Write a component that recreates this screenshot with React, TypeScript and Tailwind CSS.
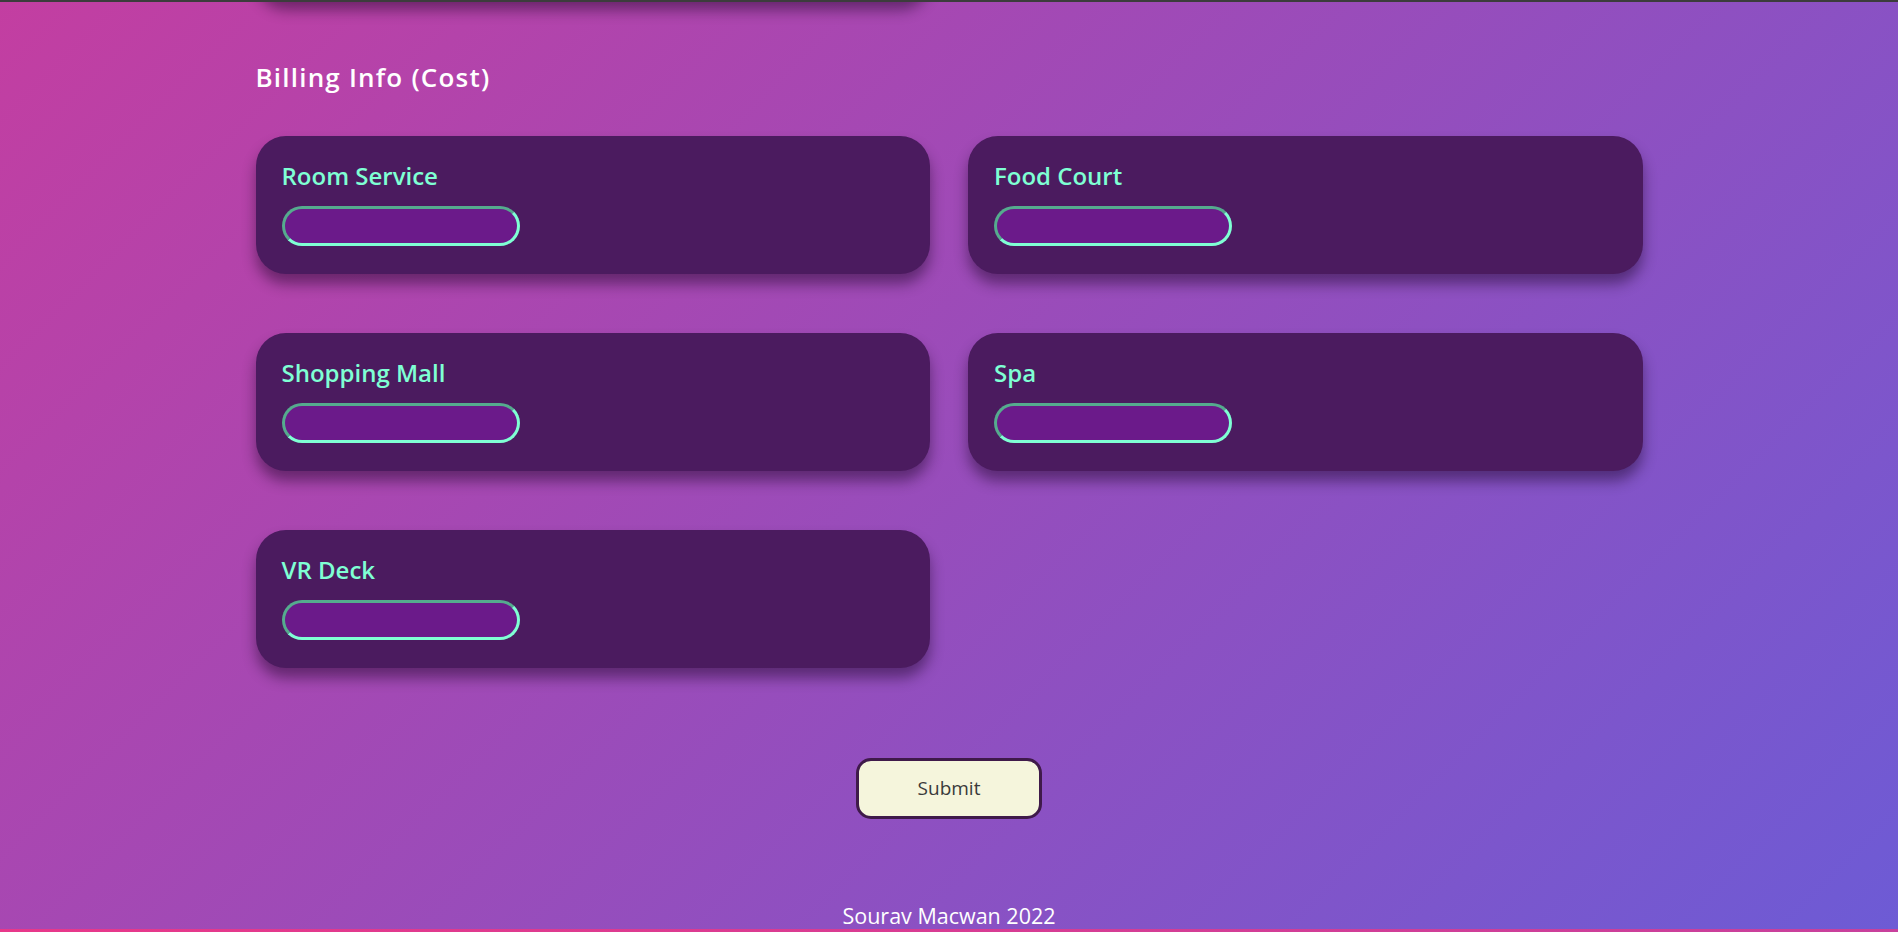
import React from 'react';

// Campos de costos del formulario
const billingFields = ['Room Service', 'Food Court', 'Shopping Mall', 'Spa', 'VR Deck'];

const CostCard: React.FC<{ label: string }> = ({ label }) => (
  <div className="h-[138px] rounded-[30px] bg-[#4b1b5f] px-[26px] pt-[24px] shadow-[0_10px_14px_rgba(20,0,30,0.45)]">
    <label className="block text-[24px] leading-[31px] font-semibold text-[#7fffd4]">{label}</label>
    <input
      type="text"
      className="mt-[15px] block h-[40px] w-[238px] rounded-full border-[3px] border-[#7fffd4] [border-style:inset] bg-[#6b1a8a] px-4 text-white outline-none"
    />
  </div>
);

export default function App() {
  return (
    <div className="relative h-[932px] w-full overflow-hidden bg-[linear-gradient(135deg,#c33ea1,#6d5bd5)] font-['Open_Sans',sans-serif]">
      {/* borde superior */}
      <div className="relative z-10 h-[2px] bg-[#3c3c3c]" />

      {/* última tarjeta de la sección anterior, casi fuera de la vista */}
      <div className="mx-auto w-[1387px]">
        <div className="-mt-[140px] h-[138px] w-[674px] rounded-[30px] bg-[#4b1b5f] shadow-[0_10px_14px_rgba(20,0,30,0.45)]" />
      </div>

      <div className="mx-auto mt-[60px] w-[1387px]">
        <h2 className="text-[26px] leading-[34px] font-semibold tracking-[1.2px] text-white">Billing Info (Cost)</h2>

        <div className="mt-[42px] grid grid-cols-2 gap-x-[38px] gap-y-[59px]">
          {billingFields.map((f) => (
            <CostCard key={f} label={f} />
          ))}
        </div>

        <div className="mt-[90px] flex justify-center">
          <button className="h-[61px] w-[186px] rounded-[15px] border-[3px] border-[#3f1a4a] bg-[#f5f5dc] text-[19px] text-[#3a3a3a]">
            Submit
          </button>
        </div>

        <p className="mt-[83px] text-center text-[21.5px] leading-7 text-white">Sourav Macwan 2022</p>
      </div>

      {/* franja rosa inferior */}
      <div className="absolute bottom-0 left-0 h-[3px] w-full bg-[linear-gradient(90deg,#e8388a,#c8409c)]" />
    </div>
  );
}
